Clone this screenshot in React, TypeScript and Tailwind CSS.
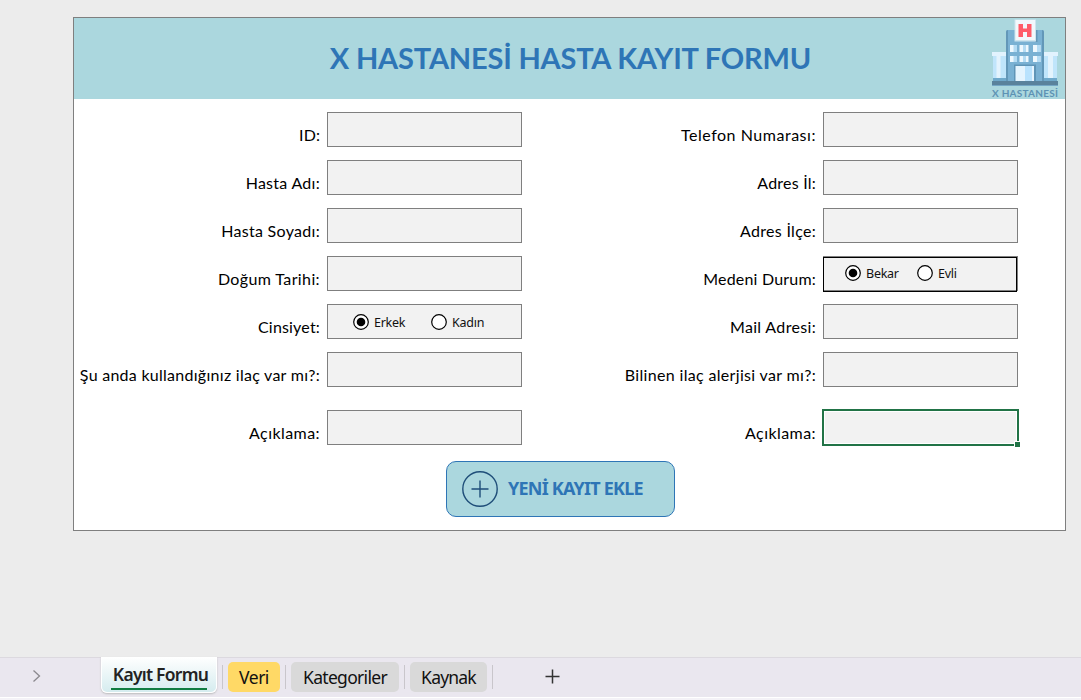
import { useState } from "react";
import { clsx } from "clsx";

interface Field {
  id: string;
  label: string;
  tracking: string;
  options?: string[];
  optionClass?: string;
  groupClass?: string;
  framed?: boolean;
  selected?: boolean;
}

const LEFT_FIELDS: Field[] = [
  { id: "id", label: "ID:", tracking: "tracking-[0.1px]" },
  { id: "ad", label: "Hasta Adı:", tracking: "tracking-[0.28px]" },
  { id: "soyad", label: "Hasta Soyadı:", tracking: "tracking-[0.3px]" },
  { id: "dogum", label: "Doğum Tarihi:", tracking: "tracking-[0.38px]" },
  {
    id: "cinsiyet",
    label: "Cinsiyet:",
    tracking: "tracking-[0.18px]",
    options: ["Erkek", "Kadın"],
    optionClass: "w-[78px]",
    groupClass: "pl-[25px] pt-px",
  },
  { id: "ilac", label: "Şu anda kullandığınız ilaç var mı?:", tracking: "tracking-[0.27px]" },
  { id: "aciklama", label: "Açıklama:", tracking: "tracking-[0.43px]" },
];

const RIGHT_FIELDS: Field[] = [
  { id: "telefon", label: "Telefon Numarası:", tracking: "tracking-[0.53px]" },
  { id: "il", label: "Adres İl:", tracking: "tracking-[0.22px]" },
  { id: "ilce", label: "Adres İlçe:", tracking: "tracking-[0.3px]" },
  {
    id: "medeni",
    label: "Medeni Durum:",
    tracking: "tracking-[0.2px]",
    options: ["Bekar", "Evli"],
    optionClass: "w-[72px]",
    groupClass: "pl-[21px] pb-px",
    framed: true,
  },
  { id: "mail", label: "Mail Adresi:", tracking: "tracking-[0.33px]" },
  { id: "alerji", label: "Bilinen ilaç alerjisi var mı?:", tracking: "tracking-[0.33px]" },
  { id: "aciklama2", label: "Açıklama:", tracking: "tracking-[0.43px]", selected: true },
];

function HospitalLogo() {
  return (
    <svg viewBox="0 0 70 80" className="h-[80px] w-[70px] overflow-visible" role="img" aria-label="X Hastanesi">
      {/* yan kanatlar */}
      <rect x="3" y="35" width="13" height="26" fill="#c0e5fb" />
      <rect x="54" y="35" width="13" height="26" fill="#c0e5fb" />
      <path d="M6.500 36h4v22h-4zM58 36h5v22h-5z" fill="#e3f3fd" />
      <rect x="2" y="32" width="14" height="4" fill="#e2f3fe" />
      <rect x="54" y="32" width="14" height="4" fill="#e2f3fe" />
      <path d="M3 58h13v3H3zM54 58h13v3H54z" fill="#6fa9cb" />
      {/* ana bina */}
      <path d="M16 12q0-2 2-2h34q2 0 2 2v49H16z" fill="#7ab1d3" />
      <path d="M16 12q0-2 2-2v51h-2zM52 10q2 0 2 2v49h-2zM45 10h2.500v12H45z" fill="#6397b8" />
      <rect x="24" y="44.500" width="22" height="16.500" fill="#6095b7" />
      <path d="M20 25h7v7h-7zM29.500 25h9v7h-9zM43 25h7.500v7H43zM20 36h7v6h-7zM29.500 36h9v6h-9zM43 36h7.500v6H43z" fill="#eef8fe" />
      <path d="M23.500 25h3.500v7h-3.500zM33 25h3v7h-3zM47 25h3.500v7H47zM23.500 36h3.500v6h-3.500zM33 36h3v6h-3zM47 36h3.500v6H47z" fill="#b5dcf4" />
      {/* kapı */}
      <rect x="25.500" y="46" width="18.500" height="15" fill="#e5f4fe" />
      <rect x="35" y="46" width="7" height="15" fill="#b9e2fd" />
      <rect x="2" y="61" width="66" height="4" fill="#5a829c" />
      <rect x="2" y="65" width="66" height="1" fill="#74a6c5" />
      {/* tabela */}
      <rect x="24.500" y="-0.500" width="21.500" height="22" fill="#cfe5ef" />
      <rect x="25.500" y="0" width="19.500" height="20" fill="#f2f8fc" />
      <path d="M28.500 4h4.500v4.500h4V4h4.500v13H37v-5h-4v5h-4.500z" fill="#ff5c69" />
      <text
        x="2"
        y="77"
        textLength="66"
        lengthAdjust="spacing"
        className="fill-[#5d92b4] font-['Lato',sans-serif] text-[10px] font-bold"
      >
        X HASTANESİ
      </text>
    </svg>
  );
}

function RadioGroup({ field }: { field: Field }) {
  const [value, setValue] = useState(field.options?.[0]);

  return (
    <div role="radiogroup" aria-label={field.label} className={clsx("flex h-full items-center", field.groupClass)}>
      {field.options?.map((option) => (
        <button
          key={option}
          type="button"
          role="radio"
          aria-checked={value === option}
          onClick={() => setValue(option)}
          className={clsx("flex items-center gap-[5px]", field.optionClass)}
        >
          <svg viewBox="0 0 16 16" className="h-4 w-4 shrink-0">
            <circle cx="8" cy="8" r="7.300" fill="#fff" stroke="#000" strokeWidth="1.200" />
            {value === option && <circle cx="8" cy="8" r="4.300" />}
          </svg>
          <span className="pt-px font-['Noto_Sans',sans-serif] text-[12.5px] leading-4 tracking-[-0.25px] text-[#111]">
            {option}
          </span>
        </button>
      ))}
    </div>
  );
}

function FieldRow({ field }: { field: Field }) {
  return (
    <div className="flex h-[35px] justify-end gap-[7px] last:mt-[10px]">
      <label
        htmlFor={field.id}
        className={clsx("self-end pb-[2px] text-[16px] leading-[20px] whitespace-nowrap text-black", field.tracking)}
      >
        {field.label}
      </label>
      {field.options ? (
        <div className="relative w-[195px] border border-[#7f7f7f] bg-[#f2f2f2]">
          <RadioGroup field={field} />
          {field.framed && (
            <span className="pointer-events-none absolute top-0 right-0 -bottom-[2px] -left-px border border-black" />
          )}
        </div>
      ) : (
        <div className="relative w-[195px]">
          <input
            id={field.id}
            className="block h-[35px] w-full border border-[#7f7f7f] bg-[#f2f2f2] px-2 outline-none"
          />
          {field.selected && (
            <>
              <span className="pointer-events-none absolute -inset-px border-2 border-[#217346] shadow-[inset_0_0_0_1px_#fff]" />
              <span className="absolute -right-[2px] -bottom-[2px] h-[6px] w-[6px] border-t border-l border-white bg-[#217346]" />
            </>
          )}
        </div>
      )}
    </div>
  );
}

function SheetTabs() {
  return (
    <nav className="flex h-[43px] flex-col bg-[#f4f2f7]">
      <div className="flex h-10 border-t border-[#dcd9df] bg-[#eae7ef]">
        <svg viewBox="0 0 10 14" className="mt-[11px] ml-8 h-[14px] w-[10px]" fill="none" stroke="#8b898e" strokeWidth="1.300">
          <path d="M1.500 1.500 7.500 7l-6 5.500" />
        </svg>
        <button
          type="button"
          className="-mt-px ml-[59px] h-[36px] w-[116px] rounded-b-md border border-t-0 border-white bg-linear-to-b from-white to-[#d5ecef] px-[9px] shadow-[0_1px_2px_#bbb]"
        >
          <span className="flex h-[31px] items-center justify-center border-b-2 border-[#107c41] pt-px pl-[3px] text-[17.5px] font-semibold tracking-[-0.75px] whitespace-nowrap text-[#222]">
            Kayıt Formu
          </span>
        </button>
        <Separator className="ml-[5px]" />
        <SheetTab name="Veri" className="ml-[5px] w-[52px] bg-[#ffd966] tracking-[-0.5px]" />
        <Separator className="ml-[5px]" />
        <SheetTab name="Kategoriler" className="ml-[5px] w-[108px] bg-[#d9d9d9] tracking-[-0.7px]" />
        <Separator className="ml-[5px]" />
        <SheetTab name="Kaynak" className="ml-[5px] w-[77px] bg-[#d9d9d9] tracking-[-0.8px]" />
        <Separator className="ml-[5px]" />
        <button type="button" aria-label="Yeni sayfa" className="mt-[11px] ml-[52px] h-[15px]">
          <svg viewBox="0 0 15 15" className="h-[15px] w-[15px]" stroke="#333" strokeWidth="1.500">
            <path d="M7.500 0.500v14M0.500 7.500h14" />
          </svg>
        </button>
      </div>
      <div className="h-px bg-white" />
    </nav>
  );
}

function Separator({ className }: { className: string }) {
  return <span className={clsx("mt-[7px] h-6 w-px bg-[#c9c6cb]", className)} />;
}

function SheetTab({ name, className }: { name: string; className: string }) {
  return (
    <button
      type="button"
      className={clsx("mt-1 h-[30px] rounded-[5px] pt-px text-[17.5px] leading-[29px] text-[#111]", className)}
    >
      {name}
    </button>
  );
}

export default function App() {
  return (
    <div className="flex h-[700px] w-[1081px] flex-col justify-between overflow-hidden bg-[#ececec]">
      <main className="mt-[17px] ml-[73px] h-[514px] w-[993px] border border-[#7f7f7f] bg-white font-['Lato',sans-serif]">
        <header className="flex h-[81px] items-start justify-end bg-[#abd7de]">
          <h1 className="mt-[20px] mr-[179px] text-[29px] leading-[40px] font-bold tracking-[-0.2px] whitespace-nowrap text-[#2e75b6]">
            X HASTANESİ HASTA KAYIT FORMU
          </h1>
          <div className="mt-[2px] mr-[5px]">
            <HospitalLogo />
          </div>
        </header>

        <form className="flex pt-[13px]" onSubmit={(e) => e.preventDefault()}>
          <div className="flex w-[448px] flex-col gap-[13px]">
            {LEFT_FIELDS.map((field) => (
              <FieldRow key={field.id} field={field} />
            ))}
          </div>
          <div className="flex w-[496px] flex-col gap-[13px]">
            {RIGHT_FIELDS.map((field) => (
              <FieldRow key={field.id} field={field} />
            ))}
          </div>
        </form>

        <button
          type="button"
          className="mt-4 ml-[372px] flex h-[56px] w-[229px] items-center rounded-[10px] border border-[#2e75b6] bg-[#abd7de] pl-[15px]"
        >
          <svg viewBox="0 0 36 36" className="h-9 w-9" fill="none" stroke="#1f4e79" strokeWidth="1.400">
            <circle cx="18" cy="18" r="17.200" />
            <path d="M18 9.500v17M9.500 18h17" />
          </svg>
          <span className="ml-[10px] pb-[2px] font-['Noto_Sans',sans-serif] text-[18px] font-bold tracking-[-0.78px] whitespace-nowrap text-[#2e75b6]">
            YENİ KAYIT EKLE
          </span>
        </button>
      </main>

      <div className="font-['Noto_Sans',sans-serif]">
        <SheetTabs />
      </div>
    </div>
  );
}
